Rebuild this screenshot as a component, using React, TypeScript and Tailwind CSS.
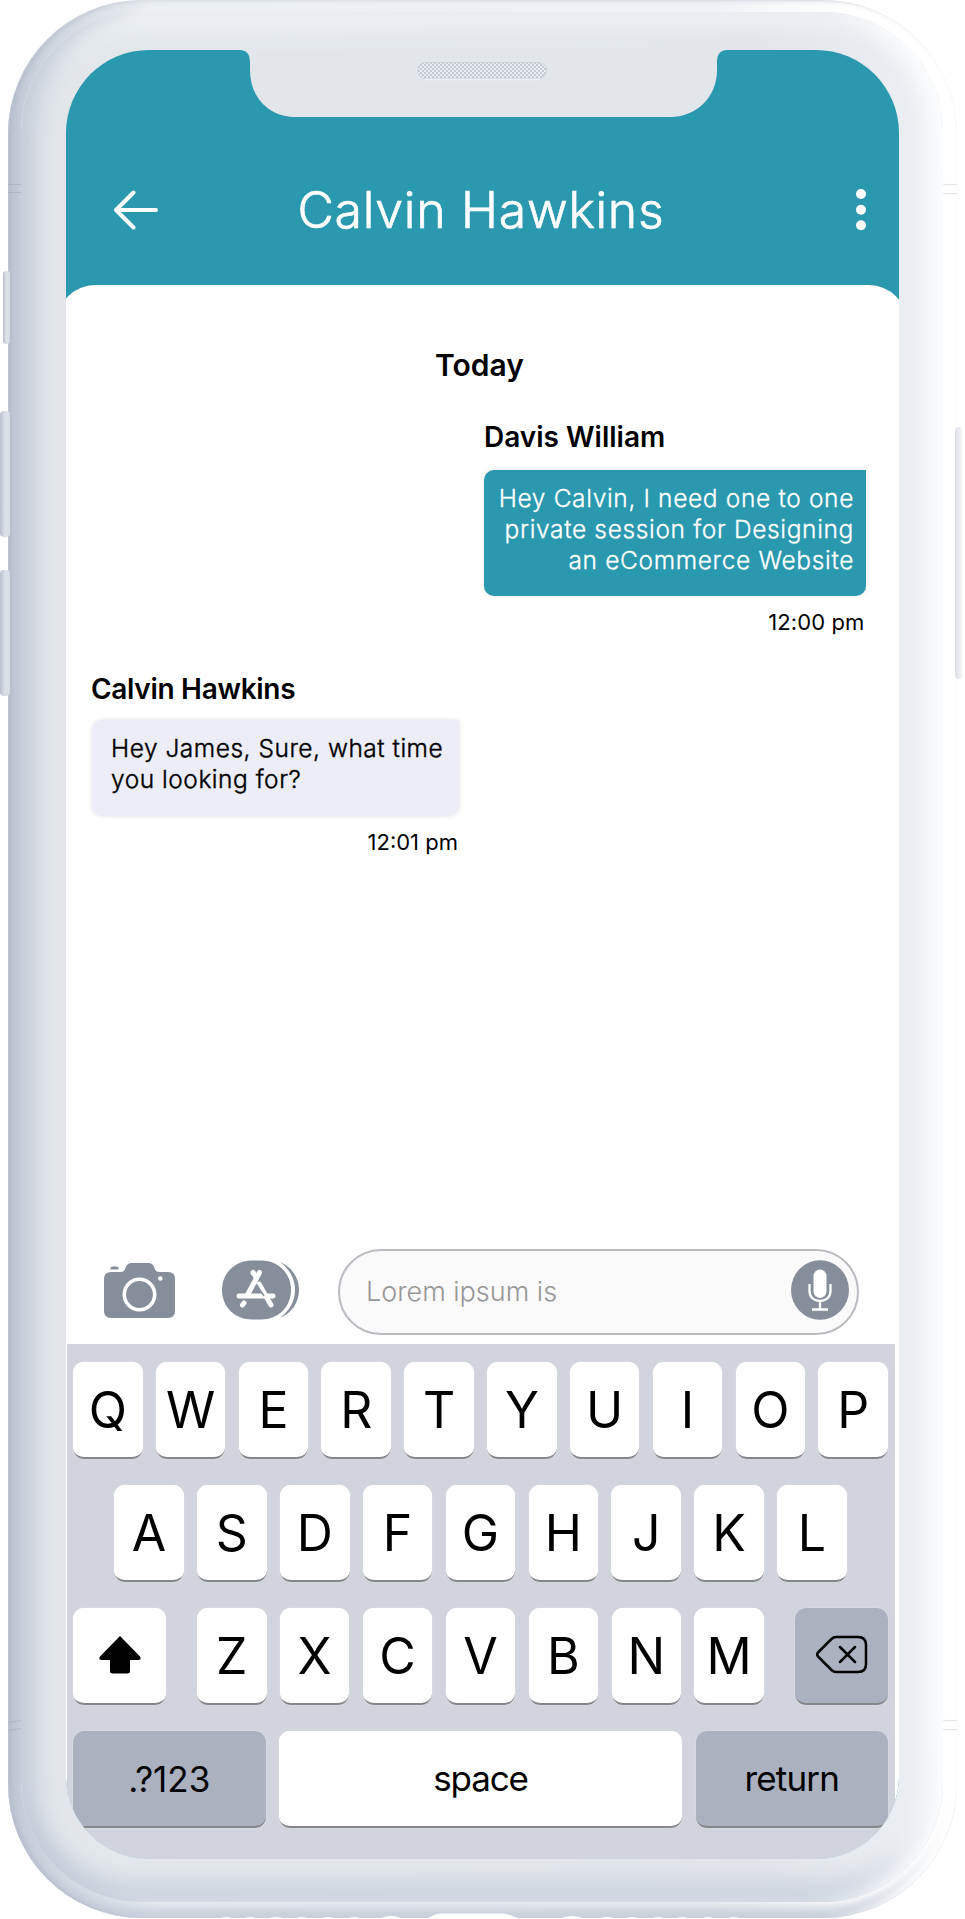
import type { ReactNode } from "react";

function Key({ children, className = "" }: { children: ReactNode; className?: string }) {
  return (
    <button
      className={`flex h-[97px] items-center justify-center rounded-[11px] border-b-2 border-[#85868a] shadow-[0_0_1px_#ffffff] ${className}`}
    >
      {children}
    </button>
  );
}

function LetterKeys({ letters }: { letters: string }) {
  return (
    <>
      {letters.split("").map((letter) => (
        <Key key={letter} className="w-[69.5px] bg-white pt-[2px] text-[50px] leading-none">
          {letter}
        </Key>
      ))}
    </>
  );
}

function Notch() {
  return (
    <svg className="absolute top-0 left-[172px]" width="490" height="68" viewBox="0 0 490 68">
      <path
        d="M0 -1H490V0C482 0 479.500 5 479.500 13V20C479.500 48 458 67 433 67H58C32 67 12.500 48 12.500 20V13C12.500 5 10 0 2 0H0Z"
        transform="translate(-.5 0)"
        fill="#e2e5ea"
      />
      <defs>
        <pattern id="mesh" width="4" height="4" patternUnits="userSpaceOnUse">
          <rect width="4" height="4" fill="#eceff2" />
          <path d="M0 0h2v2H0zM2 2h2v2H2z" fill="#c3cad4" />
        </pattern>
      </defs>
      <rect x="179.500" y="12.500" width="129" height="16" rx="8" fill="url(#mesh)" stroke="#cdd2db" />
      <path d="M187 29.500H302" stroke="#f1f3f5" strokeWidth="1.500" />
    </svg>
  );
}

function CameraIcon() {
  return (
    <svg width="71" height="56" viewBox="0 0 71 56" fill="#868e99">
      <path d="M7 10H17C23 10 20 1 28 1H44C52 1 49 10 55 10H64Q71 10 71 17V49Q71 56 64 56H7Q0 56 0 49V17Q0 10 7 10Z" />
      <path d="M6.500 7.500V6Q6.500 4.500 8.500 4.500H12.500Q14.500 4.500 14.500 6V7.500Z" />
      <circle cx="35.500" cy="32.500" r="15.200" fill="none" stroke="white" strokeWidth="3.600" />
      <circle cx="56.300" cy="16.500" r="2.300" fill="white" />
    </svg>
  );
}

function AppsIcon() {
  return (
    <svg width="78" height="60" viewBox="0 0 78 60" fill="#868e99">
      <path d="M30 .5H39C56 .5 69 13 69 30S56 59.500 39 59.500H30C13 59.500 0 47 0 30S13 .5 30 .5Z" />
      <path d="M58 2C70 7 77 18 77 30S70 53 58 58C67 51 73 42 73 30S67 9 58 2Z" />
      <g stroke="white" strokeWidth="5" strokeLinecap="round" fill="none">
        <path d="M37.500 12.500 26 34" />
        <path d="M31 12.500 34 17" />
        <path d="M17 36H51" />
        <path d="M37 24 49 45" />
        <path d="M22 43 20.500 45" />
      </g>
      <path d="M34.500 24.500 42 36" stroke="#868e99" strokeWidth="1.500" />
    </svg>
  );
}

function MicIcon() {
  return (
    <svg className="mb-[3px]" width="58" height="60" viewBox="0 0 58 60">
      <ellipse cx="29" cy="30" rx="29" ry="29.700" fill="#868e99" />
      <rect x="22.500" y="9.500" width="13" height="28.500" rx="6.500" fill="white" />
      <path
        d="M18.500 24V31C18.500 37 23 41 29 41S39.500 37 39.500 31V24M29 41V49M21 49.500H37"
        fill="none"
        stroke="white"
        strokeWidth="2.300"
      />
    </svg>
  );
}

function DeviceButtons() {
  return (
    <>
      <span className="absolute top-[271px] left-[3px] h-[73px] w-[7px] rounded-[3px] bg-linear-to-r from-[#b9c0cd] via-[#dfe3e9] to-[#d5dae2]" />
      <span className="absolute top-[411px] left-0 h-[126px] w-[10px] rounded-[4px] bg-linear-to-r from-[#b9c0cd] via-[#dbe0e7] to-[#d8dde4]" />
      <span className="absolute top-[570px] left-0 h-[126px] w-[10px] rounded-[4px] bg-linear-to-r from-[#b9c0cd] via-[#dbe0e7] to-[#d8dde4]" />
      <span className="absolute top-[427px] left-[955px] h-[252px] w-[8px] rounded-[4px] bg-linear-to-r from-[#dcdfe6] via-[#e9ebf0] to-[#fafbfc]" />
      <span className="absolute top-[184px] left-[8px] h-[9px] w-[13px] border-y border-[#b0b8c5]" />
      <span className="absolute top-[1721px] left-[8px] h-[9px] w-[13px] -skew-y-6 border-y border-[#b0b8c5]" />
      <span className="absolute top-[184px] left-[943px] h-[10px] w-[14px] skew-y-3 border-y border-[#dfe2e8]" />
      <span className="absolute top-[1720px] left-[943px] h-[10px] w-[14px] skew-y-3 border-y border-[#dfe2e8]" />
      <svg className="absolute top-[1912px] left-[210px]" width="550" height="7" viewBox="0 0 550 7" fill="white">
        <path d="M215 7C222 5 224 1.500 232 1.500H291C299 1.500 303 5 312 7Z" />
        <path d="M8 7Q16 3 24 7ZM32 7Q40 3 48 7ZM56 7Q66 3 76 7ZM84 7Q92 3 100 7ZM110 7Q118 3 126 7ZM136 7Q144 3 152 7ZM168 7Q181 1 194 7ZM349 7Q362 1 375 7ZM388 7Q397 3 406 7ZM414 7Q422 3 430 7ZM440 7Q448 3 456 7ZM464 7Q472 3 480 7ZM490 7Q498 3 506 7ZM516 7Q524 3 532 7Z" />
      </svg>
    </>
  );
}

export default function App() {
  return (
    <div className="relative h-[1919px] w-[965px] overflow-hidden bg-white font-['Inter',sans-serif] text-black">
      <div className="ml-[7.500px] h-[1918px] w-[949.500px] rounded-[134px] bg-[linear-gradient(90deg,#bdc5d0_0px,#c5cdd7_14px,#d5dae2_60px,#edf0f3_150px,#eff2f5_700px,#ffffff_840px)] pt-[12px] pl-[13.500px] shadow-[inset_4px_0_6px_-1px_#b2bac8,inset_-14px_0_8px_-3px_#ffffff,inset_0_-14px_12px_-3px_#c8cfda,inset_0_0_0_1px_#f0f2f5]">
        <div className="h-[1890px] w-[922px] rounded-[120px] bg-[linear-gradient(90deg,#e0e4e9_0%,#e4e8ec_10%,#e2e5ea_80%,#eaedf1_96%)] pt-[38px] pl-[45px] shadow-[inset_24px_0_20px_-10px_#c6cdd8,inset_-24px_0_22px_-8px_#fcfdfe,inset_0_24px_20px_-8px_#edf0f3,inset_0_-28px_22px_-8px_#cbd2dd,inset_0_0_0_1px_#e4e8ec]">
          <div className="relative flex h-[1809px] w-[833px] flex-col overflow-hidden rounded-[83px] bg-[#2a98ae]">
            <Notch />
            <header className="flex h-[235px] items-center pt-[84px] pr-[33px] pb-0 pl-[48px] text-white">
              <svg width="44" height="40" viewBox="0 0 44 40" fill="none" stroke="white" strokeWidth="4" strokeLinecap="round" strokeLinejoin="round">
                <path d="M42 20H2M19.500 2.500 2 20 19.500 37.500" />
              </svg>
              <h1 className="flex-1 pr-[52px] text-center text-[50px] leading-none font-light tracking-[0.700px] [-webkit-text-stroke:0.7px_white]">Calvin Hawkins</h1>
              <svg width="10" height="42" viewBox="0 0 10 42" fill="white">
                <circle cx="5" cy="5" r="5" />
                <circle cx="5" cy="20.700" r="5" />
                <circle cx="5" cy="36.300" r="5" />
              </svg>
            </header>
            <main className="mr-[-8px] ml-[-9px] flex flex-1 flex-col rounded-t-[38px] bg-white pr-[8px] pl-[9px]">
              <section className="flex h-[946px] flex-col px-[25px]">
                <h2 className="mt-[60px] pr-[6px] text-center text-[30px] leading-[40px] font-semibold">Today</h2>
                <article className="mt-[34px] mr-[8px] ml-auto flex w-[382px] flex-col">
                  <h3 className="text-[28px] leading-[36px] font-semibold">Davis William</h3>
                  <p className="mt-[14.500px] h-[126px] rounded-[10px] rounded-tr-none bg-[#2a98ae] pt-[13px] pr-[12px] text-right text-[24.500px] leading-[31.300px] font-light tracking-[0.650px] whitespace-nowrap text-white shadow-[0_0_5px_#00000014] [-webkit-text-stroke:0.3px_white]">
                    Hey Calvin, I need one to one
                    <br />
                    private session for Designing
                    <br />
                    an eCommerce Website
                  </p>
                  <time className="mt-[11.500px] pr-[1.500px] text-right text-[22px] leading-[30px] tracking-[0.100px]">12:00 pm</time>
                </article>
                <article className="mt-[34px] flex w-[368px] flex-col">
                  <h3 className="text-[28px] leading-[36px] font-semibold tracking-[-0.300px]">Calvin Hawkins</h3>
                  <p className="mt-[13px] ml-px h-[96px] rounded-[10px] rounded-tr-none bg-[#ededf7] pt-[13px] pl-[19px] text-[24.500px] leading-[31.300px] font-light tracking-[0.520px] whitespace-nowrap shadow-[0_0_5px_#0000001f] [-webkit-text-stroke:0.4px_black]">
                    Hey James, Sure, what time
                    <br />
                    you looking for?
                  </p>
                  <time className="mt-[11px] pr-[1px] text-right text-[22px] leading-[30px]">12:01 pm</time>
                </article>
              </section>
              <form className="flex h-[112.500px] items-center pt-[9px] pl-[38px]">
                <div className="mb-[4px]">
                  <CameraIcon />
                </div>
                <div className="mb-[3px] ml-[47px]">
                  <AppsIcon />
                </div>
                <label className="ml-[38px] flex h-[86px] w-[521px] items-center justify-between rounded-[43px] border-2 border-[#bcbbc2] bg-[#fafafa] pr-[8px] pl-[26px] text-[27px] font-light text-[#979797]">
                  <span>Lorem ipsum is</span>
                  <MicIcon />
                </label>
              </form>
              <section className="ml-px flex w-[828px] flex-1 flex-col gap-[26px] bg-[#d1d4dc] pt-[18px] pr-[7px] pl-[6px]">
                <div className="flex justify-between">
                  <LetterKeys letters="QWERTYUIOP" />
                </div>
                <div className="flex justify-between px-[41.300px]">
                  <LetterKeys letters="ASDFGHJKL" />
                </div>
                <div className="flex justify-between">
                  <Key className="w-[93px] bg-white">
                    <svg width="42" height="38" viewBox="0 0 42 38">
                      <path d="M21 0 41 20.500Q43 24 39.500 24H31V35Q31 37.500 28.500 37.500H13.500Q11 37.500 11 35V24H2.500Q-1 24 1 20.500Z" />
                    </svg>
                  </Key>
                  <div className="flex w-[567px] justify-between">
                    <LetterKeys letters="ZXCVBNM" />
                  </div>
                  <Key className="w-[93px] bg-[#abb1be]">
                    <svg width="52" height="40" viewBox="0 0 52 40" fill="none" stroke="black" strokeWidth="2.500" strokeLinecap="round" strokeLinejoin="round">
                      <path d="M20 2H42Q50 2 50 10V29Q50 37 42 37H20Q17.500 37 15.500 35L2.500 22Q0 19.500 2.500 17L15.500 4Q17.500 2 20 2ZM24 12 39 27M39 12 24 27" />
                    </svg>
                  </Key>
                </div>
                <div className="flex justify-between text-[35px] leading-none">
                  <Key className="w-[192.500px] bg-[#abb1be] pt-[2px]">.?123</Key>
                  <Key className="w-[402.500px] bg-white tracking-[-1.200px]">space</Key>
                  <Key className="w-[192.500px] bg-[#abb1be] tracking-[-0.800px]">return</Key>
                </div>
              </section>
            </main>
          </div>
        </div>
      </div>
      <DeviceButtons />
    </div>
  );
}
